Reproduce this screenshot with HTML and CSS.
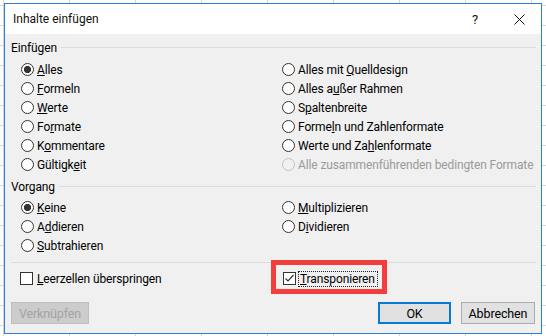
FILE: index.html
```html
<!DOCTYPE html>
<html lang="de">
<head>
<meta charset="utf-8">
<title>Inhalte einfügen</title>
<link rel="stylesheet" href="styles.css">
</head>
<body>
<div class="dialog">
  <div class="titlebar">
    <span class="title">Inhalte einfügen</span>
    <span class="help">?</span>
    <span class="close"><svg width="11" height="11" viewBox="0 0 11 11"><path d="M0.5 0.5L10.5 10.5M10.5 0.5L0.5 10.5" stroke="#111" stroke-width="1" fill="none"/></svg></span>
  </div>
  <div class="content">
    <div class="group-head"><span class="group-label">Einfügen</span><span class="rule"></span></div>
    <div class="options">
      <div class="opt"><span class="radio on"></span><span><u>A</u>lles</span></div>
      <div class="opt"><span class="radio"></span><span>Alles mit <u>Q</u>uelldesign</span></div>
      <div class="opt"><span class="radio"></span><span><u>F</u>ormeln</span></div>
      <div class="opt"><span class="radio"></span><span>Alles a<u>u</u>ßer Rahmen</span></div>
      <div class="opt"><span class="radio"></span><span><u>W</u>erte</span></div>
      <div class="opt"><span class="radio"></span><span>S<u>p</u>altenbreite</span></div>
      <div class="opt"><span class="radio"></span><span>Fo<u>r</u>mate</span></div>
      <div class="opt"><span class="radio"></span><span>Forme<u>l</u>n und Zahlenformate</span></div>
      <div class="opt"><span class="radio"></span><span>K<u>o</u>mmentare</span></div>
      <div class="opt"><span class="radio"></span><span>Werte und Za<u>h</u>lenformate</span></div>
      <div class="opt"><span class="radio"></span><span>Gültigk<u>e</u>it</span></div>
      <div class="opt disabled"><span class="radio"></span><span>Alle zusammenführenden bedingten Formate</span></div>
    </div>
    <div class="group-head group-head-2"><span class="group-label">Vorgang</span><span class="rule"></span></div>
    <div class="options options-2">
      <div class="opt"><span class="radio on"></span><span><u>K</u>eine</span></div>
      <div class="opt"><span class="radio"></span><span><u>M</u>ultiplizieren</span></div>
      <div class="opt"><span class="radio"></span><span>A<u>d</u>dieren</span></div>
      <div class="opt"><span class="radio"></span><span>D<u>i</u>vidieren</span></div>
      <div class="opt"><span class="radio"></span><span><u>S</u>ubtrahieren</span></div>
      <div class="opt"></div>
    </div>
    <div class="separator"></div>
    <div class="options checks">
      <div class="opt"><span class="check"></span><span><u>L</u>eerzellen überspringen</span></div>
      <div class="opt"><span class="marked"><span class="check"><svg width="11" height="11" viewBox="0 0 11 11"><path d="M1.5 5.5L4 8L9.5 2" stroke="#333" stroke-width="1.2" fill="none"/></svg></span><span class="focus"><u>T</u>ransponieren</span></span></div>
    </div>
    <div class="buttons">
      <span class="btn disabled">Verknüpfen</span>
      <span class="btn default">OK</span>
      <span class="btn cancel">Abbrechen</span>
    </div>
  </div>
</div>
</body>
</html>
```
FILE: styles.css
```css
html, body {
  margin: 0;
  padding: 0;
}
body {
  width: 546px;
  height: 336px;
  overflow: hidden;
  background-color: #ffffff;
  background-image:
    linear-gradient(#d6d6d6 1px, transparent 1px),
    linear-gradient(90deg, #d6d6d6 1px, transparent 1px);
  background-size: 100% 20px, 66px 100%;
  background-position: 0 5px, 3px 0;
  font-family: Roboto, "Noto Sans", sans-serif;
  font-size: 12px;
  letter-spacing: -0.12px;
  color: #000;
}
.dialog {
  box-sizing: border-box;
  margin: 3px 0 0 4px;
  width: 538px;
  height: 331px;
  border: 1px solid #2b7fd6;
  background: #f0f0f0;
  display: flex;
  flex-direction: column;
}
.titlebar {
  height: 30px;
  background: #ffffff;
  display: flex;
  align-items: center;
  padding-left: 8px;
  flex: none;
}
.title {
  font-size: 12px;
  letter-spacing: 0;
  color: #111;
}
.help {
  margin-left: auto;
  width: 12px;
  text-align: center;
  font-size: 13px;
  color: #111;
}
.close {
  display: flex;
  margin-left: 33px;
  margin-right: 16px;
}
.content {
  flex: 1;
  display: flex;
  flex-direction: column;
  padding: 6px 5px 0 6px;
}
.group-head {
  height: 16px;
  display: flex;
  align-items: center;
  gap: 4px;
  line-height: 16px;
}
.group-head-2 {
  margin-top: 5px;
}
.rule {
  flex: 1;
  height: 1px;
  background: #dcdcdc;
  margin-bottom: 2px;
}
.options {
  display: grid;
  grid-template-columns: 261px 1fr;
  grid-auto-rows: 19px;
  margin-top: 4px;
  padding-left: 10px;
}
.options-2 {
  margin-top: 3px;
}
.opt {
  display: flex;
  align-items: center;
  white-space: nowrap;
}
.opt.disabled {
  color: #9a9a9a;
}
.radio {
  box-sizing: border-box;
  width: 13px;
  height: 13px;
  border: 1px solid #333;
  border-radius: 50%;
  background: #fff;
  margin-right: 3px;
  flex: none;
}
.radio.on {
  background: radial-gradient(circle, #333 0 3.3px, #fff 3.9px);
}
.disabled .radio {
  border-color: #c2c2c2;
  background: #f0f0f0;
}
.separator {
  height: 1px;
  background: #dcdcdc;
  margin-top: 7px;
}
.checks {
  margin-top: 6px;
}
.check {
  box-sizing: border-box;
  width: 13px;
  height: 13px;
  border: 1px solid #333;
  background: #fff;
  margin-right: 3px;
  flex: none;
  display: flex;
}
.checks .opt:first-child .check {
  margin-left: -1px;
  margin-right: 4px;
}
.marked {
  position: relative;
  display: flex;
  align-items: center;
  margin-left: 1px;
  height: 19px;
}
.marked .check {
  margin-right: 2px;
}
.marked::after {
  content: "";
  position: absolute;
  left: -12px;
  right: -9px;
  top: -9px;
  bottom: -6px;
  border: 5px solid #f43d3d;
}
.focus {
  border: 1px dotted #222;
  padding: 0 2px 0 1px;
  line-height: 14px;
}
.buttons {
  display: flex;
  margin-top: 14px;
  padding-right: 1px;
}
.btn {
  box-sizing: border-box;
  height: 22px;
  display: flex;
  align-items: center;
  justify-content: center;
  background: #e1e1e1;
  border: 1px solid #adadad;
  font-size: 12.5px;
}
.btn.disabled {
  width: 78px;
  background: #cccccc;
  border-color: #bfbfbf;
  color: #a3a3a3;
}
.btn.default {
  width: 73px;
  margin-left: auto;
  border: 2px solid #0a78d7;
}
.btn.cancel {
  width: 74px;
  margin-left: 10px;
}
```
